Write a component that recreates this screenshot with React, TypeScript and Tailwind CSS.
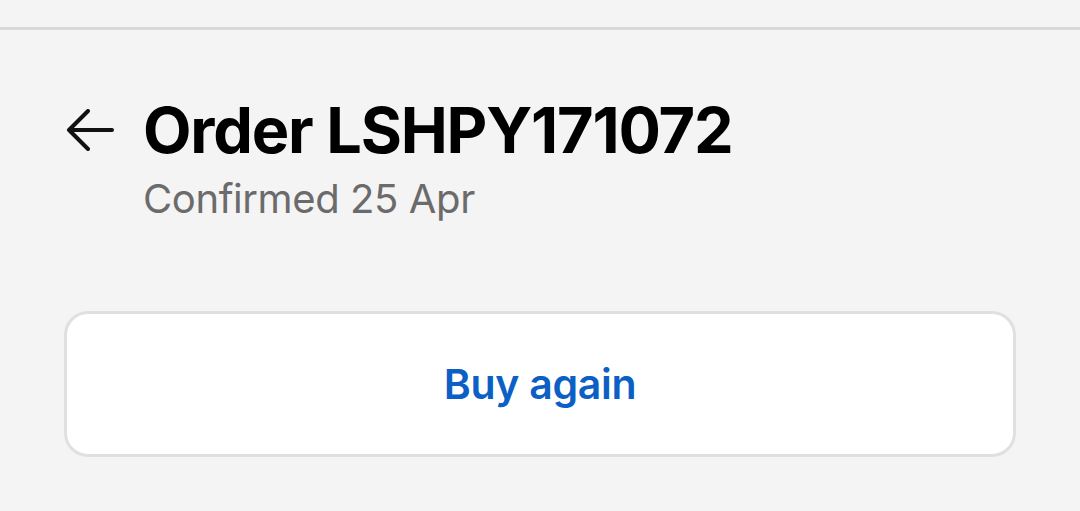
export default function App() {
  return (
    <div
      className="w-[1080px] h-[511px] overflow-hidden bg-[#f4f4f4]"
      style={{ fontFamily: "Inter, 'Noto Sans', sans-serif" }}
    >
      <div className="h-[27px]" />
      <div className="h-[3px] bg-[#d8d8d8]" />
      <div className="px-[64px] pt-[64px]">
        <div className="flex items-start">
          <button className="w-[48px] h-[42px] mt-[15px] ml-[2px] mr-[29px] flex items-center justify-start">
            <svg width="48" height="42" viewBox="0 0 48 42" fill="none">
              <path
                d="M46 21H3M22 2L3 21L22 40"
                stroke="#111"
                strokeWidth="4"
                strokeLinecap="round"
                strokeLinejoin="round"
              />
            </svg>
          </button>
          <div className="flex flex-col">
            <h1 className="text-[63px] leading-[72px] font-bold text-black tracking-[-1.2px]">
              Order LSHPY171072
            </h1>
            <p className="mt-[9px] text-[40px] leading-[48px] text-[#6b6b6b] tracking-[-0.4px]">
              Confirmed 25 Apr
            </p>
          </div>
        </div>
        <button className="mt-[88px] w-[952px] h-[146px] rounded-[24px] border-[3px] border-[#e0e0e0] bg-white flex items-center justify-center">
          <span className="text-[41px] leading-[48px] font-semibold text-[#0b5fc5] tracking-[-0.3px]">
            Buy again
          </span>
        </button>
      </div>
    </div>
  );
}
